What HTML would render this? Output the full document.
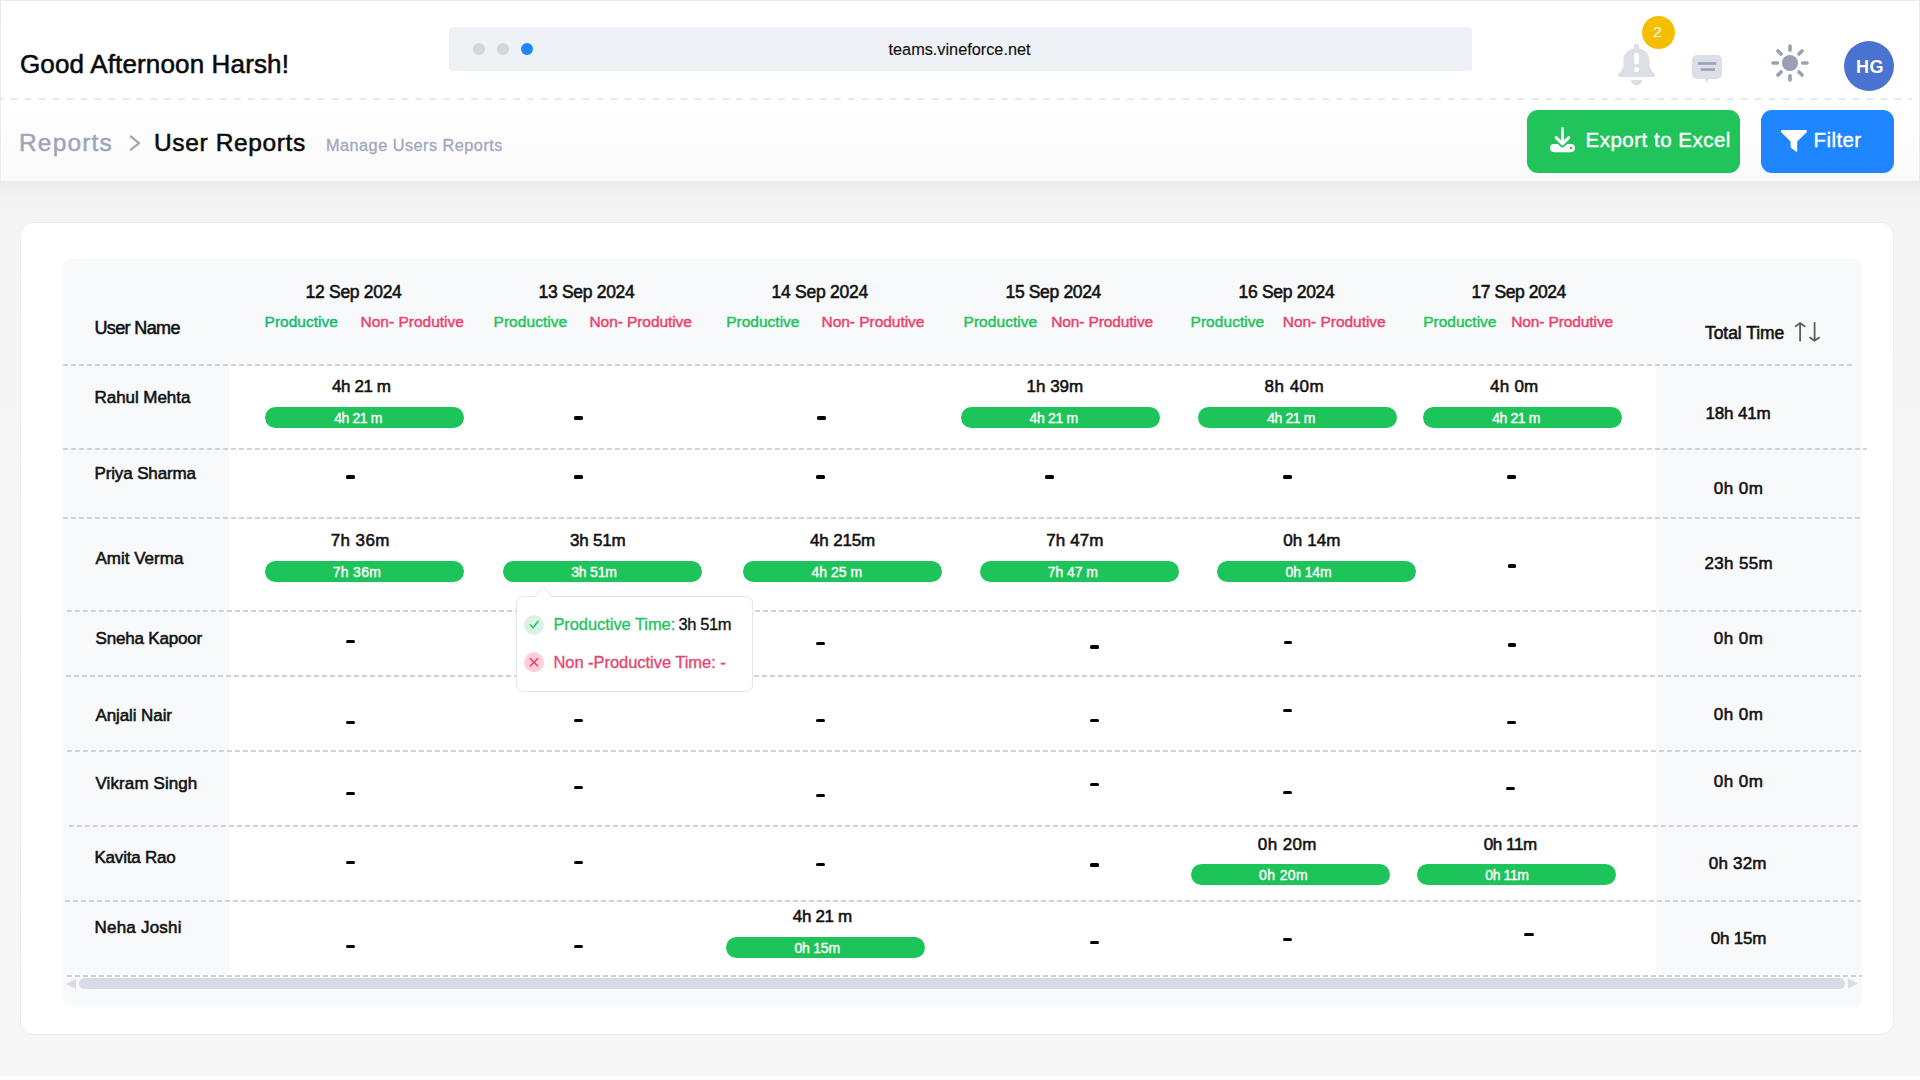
<!DOCTYPE html>
<html><head><meta charset="utf-8"><title>User Reports</title>
<style>
html,body{margin:0;padding:0;width:1920px;height:1080px;overflow:hidden;background:#f7f7f7}
body{position:relative;font-family:"Liberation Sans", sans-serif}
.t{position:absolute;white-space:nowrap;font-family:"Liberation Sans", sans-serif}
</style></head><body>
<div style="position:absolute;left:0;top:0;width:1920px;height:1080px;background:linear-gradient(#e9ebe9 0px,#ebebeb 182px,#f0f0f0 188px,#f3f3f3 200px,#f5f5f5 222px,#f6f6f6 600px,#f7f7f7 1076px,#fcfcfc 1077px,#fcfcfc 1080px)"></div><div style="position:absolute;left:1px;top:1px;width:1918px;height:180px;background:linear-gradient(#ffffff 0px,#ffffff 100px,#fafafa 180px);border-bottom:1px solid #ebebeb"></div><div style="position:absolute;left:0;top:98px;width:1912px;height:2px;background-image:linear-gradient(90deg,#e6e9f0 0 50%,transparent 50% 100%);background-size:13.955px 2px;background-position:10.63px 0"></div><div style="position:absolute;left:449px;top:27px;width:1023px;height:44px;border-radius:4px;background:#eef1f6"></div><div style="position:absolute;left:473px;top:43px;width:12px;height:12px;border-radius:50%;background:#d6d6d6"></div><div style="position:absolute;left:497px;top:43px;width:12px;height:12px;border-radius:50%;background:#d6d6d6"></div><div style="position:absolute;left:521px;top:43px;width:12px;height:12px;border-radius:50%;background:#1e85ff"></div><svg style="position:absolute;left:1610px;top:40px" width="52" height="50" viewBox="1610 40 52 50">
<circle cx="1636.5" cy="46.4" r="2.6" fill="#dcdfe5"/>
<path d="M1636.5 48 C1628.8 48 1623.4 53.5 1623.4 61.5 V65.5 C1623.4 69 1619.5 72.5 1618.3 74.3 Q1617 77 1620.2 77 H1652.8 Q1656 77 1654.7 74.3 C1653.5 72.5 1649.6 69 1649.6 65.5 V61.5 C1649.6 53.5 1644.2 48 1636.5 48 Z" fill="#dcdfe5"/>
<path d="M1631 80 H1642 A5.5 5.2 0 0 1 1631 80 Z" fill="#dcdfe5"/>
<rect x="1634.1" y="52.8" width="4.8" height="11.8" rx="2.4" fill="#ffffff"/>
<circle cx="1636.5" cy="69.6" r="2.5" fill="#ffffff"/>
</svg><div style="position:absolute;left:1641.5px;top:15.5px;width:33px;height:33px;border-radius:50%;background:#f5be00"></div><svg style="position:absolute;left:1690px;top:53px" width="36" height="32" viewBox="1690 53 36 32">
<path d="M1697 55 h20 a5 5 0 0 1 5 5 v14 a5 5 0 0 1 -5 5 h-8.5 l-2 3.5 l-2 -3.5 h-7.5 a5 5 0 0 1 -5 -5 v-14 a5 5 0 0 1 5 -5 z" fill="#dcdfe6"/>
<rect x="1698" y="62.2" width="18.2" height="2.6" fill="#9aa1b5"/>
<rect x="1700.6" y="68.2" width="14.4" height="2.6" fill="#9aa1b5"/>
</svg><svg style="position:absolute;left:1766px;top:39px" width="48" height="48" viewBox="1766 39 48 48">
<circle cx="1790" cy="63" r="8.1" fill="#98a0b3"/>
<g stroke="#98a0b3" stroke-width="3.6" stroke-linecap="round"><line x1="1790.00" y1="50.30" x2="1790.00" y2="46.00"/><line x1="1798.98" y1="54.02" x2="1802.02" y2="50.98"/><line x1="1802.70" y1="63.00" x2="1807.00" y2="63.00"/><line x1="1798.98" y1="71.98" x2="1802.02" y2="75.02"/><line x1="1790.00" y1="75.70" x2="1790.00" y2="80.00"/><line x1="1781.02" y1="71.98" x2="1777.98" y2="75.02"/><line x1="1777.30" y1="63.00" x2="1773.00" y2="63.00"/><line x1="1781.02" y1="54.02" x2="1777.98" y2="50.98"/></g></svg><div style="position:absolute;left:1844px;top:41px;width:50px;height:50px;border-radius:50%;background:#4a72d0"></div><svg style="position:absolute;left:125px;top:133px" width="20" height="22" viewBox="125 133 20 22"><path d="M131 136.6 L139 143.1 L131 149.6" fill="none" stroke="#a3aabf" stroke-width="2.5" stroke-linecap="round" stroke-linejoin="round"/></svg><div style="position:absolute;left:1527px;top:110px;width:213px;height:63px;border-radius:11px;background:#21c45b"></div><div style="position:absolute;left:1761px;top:110px;width:133px;height:63px;border-radius:11px;background:#1f86ff"></div><svg style="position:absolute;left:1546px;top:124px" width="34" height="32" viewBox="1546 124 34 32">
<rect x="1550" y="144" width="25" height="8.2" rx="4.1" fill="#fff"/>
<path d="M1556.2 137.6 L1562.5 143.9 L1568.8 137.6" stroke="#21c45b" stroke-width="6.6" fill="none" stroke-linecap="round" stroke-linejoin="round"/>
<path d="M1562.5 128.5 V142" stroke="#fff" stroke-width="2.9" stroke-linecap="round"/>
<path d="M1556.2 137.6 L1562.5 143.9 L1568.8 137.6" stroke="#fff" stroke-width="3" fill="none" stroke-linecap="round" stroke-linejoin="round"/>
<circle cx="1571" cy="148" r="1.25" fill="#21c45b"/>
</svg><svg style="position:absolute;left:1778px;top:127px" width="32" height="28" viewBox="1778 127 32 28">
<path d="M1782.4 130 H1805.6 Q1807.8 130 1806.6 132.2 L1797.2 141.6 V150.8 Q1797.2 152.6 1795.8 151.6 L1791.3 147.9 Q1790.6 147.3 1790.6 146.5 V141.6 L1781.3 132.2 Q1780.1 130 1782.4 130 Z" fill="#fff"/>
</svg><div style="position:absolute;left:20px;top:222px;width:1872px;height:811px;border-radius:13px;background:#ffffff;border:1px solid #ededed"></div><div style="position:absolute;left:63px;top:259px;width:1799px;height:748px;border-radius:8px;background:#f8f9fb"></div><div style="position:absolute;left:229px;top:365px;width:1427px;height:611px;background:#ffffff"></div><div style="position:absolute;left:63px;top:364.2px;width:1792px;height:1.6px;background:repeating-linear-gradient(90deg,#cfd2de 0 5px,transparent 5px 8px)"></div><div style="position:absolute;left:63px;top:448.2px;width:1804px;height:1.6px;background:repeating-linear-gradient(90deg,#cfd2de 0 5px,transparent 5px 8px)"></div><div style="position:absolute;left:63px;top:517.2px;width:1797px;height:1.6px;background:repeating-linear-gradient(90deg,#cfd2de 0 5px,transparent 5px 8px)"></div><div style="position:absolute;left:67px;top:610.2px;width:1794px;height:1.6px;background:repeating-linear-gradient(90deg,#cfd2de 0 5px,transparent 5px 8px)"></div><div style="position:absolute;left:66px;top:675.2px;width:1795px;height:1.6px;background:repeating-linear-gradient(90deg,#cfd2de 0 5px,transparent 5px 8px)"></div><div style="position:absolute;left:67px;top:750.2px;width:1794px;height:1.6px;background:repeating-linear-gradient(90deg,#cfd2de 0 5px,transparent 5px 8px)"></div><div style="position:absolute;left:69px;top:825.2px;width:1792px;height:1.6px;background:repeating-linear-gradient(90deg,#cfd2de 0 5px,transparent 5px 8px)"></div><div style="position:absolute;left:65px;top:900.2px;width:1796px;height:1.6px;background:repeating-linear-gradient(90deg,#cfd2de 0 5px,transparent 5px 8px)"></div><div style="position:absolute;left:67px;top:975.2px;width:1795px;height:1.6px;background:repeating-linear-gradient(90deg,#cfd2de 0 5px,transparent 5px 8px)"></div><div style="position:absolute;left:265px;top:407.0px;width:199px;height:21px;border-radius:11px;background:#1dc459"></div><div style="position:absolute;left:961px;top:407.0px;width:199px;height:21px;border-radius:11px;background:#1dc459"></div><div style="position:absolute;left:1198px;top:407.0px;width:199px;height:21px;border-radius:11px;background:#1dc459"></div><div style="position:absolute;left:1423px;top:407.0px;width:199px;height:21px;border-radius:11px;background:#1dc459"></div><div style="position:absolute;left:265px;top:561.0px;width:199px;height:21px;border-radius:11px;background:#1dc459"></div><div style="position:absolute;left:503px;top:561.0px;width:199px;height:21px;border-radius:11px;background:#1dc459"></div><div style="position:absolute;left:743px;top:561.0px;width:199px;height:21px;border-radius:11px;background:#1dc459"></div><div style="position:absolute;left:980px;top:561.0px;width:199px;height:21px;border-radius:11px;background:#1dc459"></div><div style="position:absolute;left:1217px;top:561.0px;width:199px;height:21px;border-radius:11px;background:#1dc459"></div><div style="position:absolute;left:1191px;top:864.0px;width:199px;height:21px;border-radius:11px;background:#1dc459"></div><div style="position:absolute;left:1417px;top:864.0px;width:199px;height:21px;border-radius:11px;background:#1dc459"></div><div style="position:absolute;left:726px;top:937.0px;width:199px;height:21px;border-radius:11px;background:#1dc459"></div><div style="position:absolute;left:574.0px;top:416.0px;width:9.0px;height:3.5px;border-radius:1.5px;background:#000"></div><div style="position:absolute;left:817.0px;top:416.0px;width:9.0px;height:3.5px;border-radius:1.5px;background:#000"></div><div style="position:absolute;left:346.0px;top:475.3px;width:9.0px;height:3.7px;border-radius:1.5px;background:#000"></div><div style="position:absolute;left:574.0px;top:475.3px;width:9.0px;height:3.7px;border-radius:1.5px;background:#000"></div><div style="position:absolute;left:816.0px;top:475.3px;width:9.0px;height:3.7px;border-radius:1.5px;background:#000"></div><div style="position:absolute;left:1045.0px;top:475.3px;width:9.0px;height:3.7px;border-radius:1.5px;background:#000"></div><div style="position:absolute;left:1283.0px;top:475.3px;width:9.0px;height:3.7px;border-radius:1.5px;background:#000"></div><div style="position:absolute;left:1507.0px;top:475.3px;width:9.0px;height:3.7px;border-radius:1.5px;background:#000"></div><div style="position:absolute;left:1507.5px;top:564.0px;width:8.8px;height:3.5px;border-radius:1.5px;background:#000"></div><div style="position:absolute;left:346.0px;top:640.0px;width:9.0px;height:3.3px;border-radius:1.5px;background:#000"></div><div style="position:absolute;left:816.0px;top:642.0px;width:9.0px;height:3.4px;border-radius:1.5px;background:#000"></div><div style="position:absolute;left:1090.0px;top:645.0px;width:9.0px;height:3.5px;border-radius:1.5px;background:#000"></div><div style="position:absolute;left:1284.0px;top:640.5px;width:8.0px;height:3.5px;border-radius:1.5px;background:#000"></div><div style="position:absolute;left:1508.0px;top:643.0px;width:8.0px;height:3.5px;border-radius:1.5px;background:#000"></div><div style="position:absolute;left:346.0px;top:720.6px;width:9.0px;height:3.4px;border-radius:1.5px;background:#000"></div><div style="position:absolute;left:574.0px;top:719.0px;width:9.0px;height:3.4px;border-radius:1.5px;background:#000"></div><div style="position:absolute;left:816.0px;top:719.0px;width:9.0px;height:3.4px;border-radius:1.5px;background:#000"></div><div style="position:absolute;left:1090.0px;top:719.0px;width:9.0px;height:3.4px;border-radius:1.5px;background:#000"></div><div style="position:absolute;left:1283.0px;top:709.0px;width:9.0px;height:3.4px;border-radius:1.5px;background:#000"></div><div style="position:absolute;left:1507.0px;top:720.6px;width:9.0px;height:3.4px;border-radius:1.5px;background:#000"></div><div style="position:absolute;left:346.0px;top:792.0px;width:9.0px;height:3.4px;border-radius:1.5px;background:#000"></div><div style="position:absolute;left:574.0px;top:786.0px;width:9.0px;height:3.4px;border-radius:1.5px;background:#000"></div><div style="position:absolute;left:816.0px;top:794.0px;width:9.0px;height:3.4px;border-radius:1.5px;background:#000"></div><div style="position:absolute;left:1090.0px;top:782.5px;width:9.0px;height:3.5px;border-radius:1.5px;background:#000"></div><div style="position:absolute;left:1283.0px;top:790.6px;width:9.0px;height:3.4px;border-radius:1.5px;background:#000"></div><div style="position:absolute;left:1506.0px;top:787.0px;width:9.0px;height:3.4px;border-radius:1.5px;background:#000"></div><div style="position:absolute;left:346.0px;top:860.6px;width:9.0px;height:3.4px;border-radius:1.5px;background:#000"></div><div style="position:absolute;left:574.0px;top:860.6px;width:9.0px;height:3.4px;border-radius:1.5px;background:#000"></div><div style="position:absolute;left:816.0px;top:863.0px;width:9.0px;height:3.4px;border-radius:1.5px;background:#000"></div><div style="position:absolute;left:1090.0px;top:863.3px;width:9.0px;height:3.4px;border-radius:1.5px;background:#000"></div><div style="position:absolute;left:346.0px;top:945.0px;width:9.0px;height:3.4px;border-radius:1.5px;background:#000"></div><div style="position:absolute;left:574.0px;top:945.0px;width:9.0px;height:3.4px;border-radius:1.5px;background:#000"></div><div style="position:absolute;left:1090.0px;top:940.5px;width:9.0px;height:3.5px;border-radius:1.5px;background:#000"></div><div style="position:absolute;left:1283.0px;top:938.0px;width:9.0px;height:3.4px;border-radius:1.5px;background:#000"></div><div style="position:absolute;left:1524.0px;top:933.0px;width:10.0px;height:3.4px;border-radius:1.5px;background:#000"></div><svg style="position:absolute;left:1790px;top:318px" width="36" height="28" viewBox="1790 318 36 28">
<g fill="none" stroke="#5e5e5e" stroke-width="1.8" stroke-linecap="round" stroke-linejoin="round">
<path d="M1800.1 340.8 V323.2 M1795.7 326.2 L1800.1 322.9 L1804.6 326.2"/>
<path d="M1814.6 323 V340.6 M1810 337.6 L1814.6 340.8 L1819.2 337.6"/>
</g></svg><div style="position:absolute;left:79px;top:978px;width:1766px;height:11px;border-radius:6px;background:#d9dce6"></div><svg style="position:absolute;left:60px;top:975px" width="20" height="18" viewBox="60 975 20 18"><path d="M66 984 L76 979 V989 Z" fill="#d7dbe4"/></svg><svg style="position:absolute;left:1845px;top:975px" width="20" height="18" viewBox="1845 975 20 18"><path d="M1858 983.5 L1848 978.5 V988.5 Z" fill="#d7dbe4"/></svg><div style="position:absolute;left:516px;top:596px;width:235px;height:94px;border-radius:7px;background:#fff;border:1px solid #e2e4ea"></div><svg style="position:absolute;left:530px;top:584px" width="28" height="16" viewBox="530 584 28 16"><path d="M534.5 597.5 L543.5 586.5 L552.5 597.5" fill="#fff" stroke="#e2e4ea" stroke-width="1"/><rect x="534" y="597" width="20" height="2" fill="#fff"/></svg><svg style="position:absolute;left:520px;top:610px" width="30" height="66" viewBox="520 610 30 66">
<circle cx="534" cy="625" r="10" fill="#d8f3e5"/>
<path d="M530.2 624.7 l2.9 3 l5 -6.4" fill="none" stroke="#22c35a" stroke-width="1.4" stroke-linecap="round" stroke-linejoin="round"/>
<circle cx="534" cy="662.3" r="10" fill="#fccfda"/>
<path d="M530.3 658.6 l7.4 7.4 M537.7 658.6 l-7.4 7.4" fill="none" stroke="#e9436b" stroke-width="1.6" stroke-linecap="round"/>
</svg><div id="t_title" class="t" style="left:20.00px;top:51.39px;font-size:26.00px;line-height:26.00px;font-weight:400;color:#0a0a0a;letter-spacing:0.150px;-webkit-text-stroke:0.55px #0a0a0a">Good Afternoon Harsh!</div><div id="t_url" class="t" style="left:888.50px;top:41.00px;font-size:16.30px;line-height:16.30px;font-weight:400;color:#111111;letter-spacing:0.000px;-webkit-text-stroke:0.15px #111111">teams.vineforce.net</div><div id="t_reports" class="t" style="left:19.00px;top:131.26px;font-size:24.50px;line-height:24.50px;font-weight:400;color:#9ea5ba;letter-spacing:1.167px;-webkit-text-stroke:0.50px #9ea5ba">Reports</div><div id="t_userreports" class="t" style="left:154.00px;top:131.26px;font-size:24.50px;line-height:24.50px;font-weight:400;color:#0b0b0b;letter-spacing:0.636px;-webkit-text-stroke:0.55px #0b0b0b">User Reports</div><div id="t_manage" class="t" style="left:326.00px;top:137.20px;font-size:16.30px;line-height:16.30px;font-weight:400;color:#a0a7bc;letter-spacing:0.474px;-webkit-text-stroke:0.30px #a0a7bc">Manage Users Reports</div><div id="t_export" class="t" style="left:1585.50px;top:130.05px;font-size:20.50px;line-height:20.50px;font-weight:400;color:#ffffff;letter-spacing:0.500px;-webkit-text-stroke:0.40px #ffffff">Export to Excel</div><div id="t_filter" class="t" style="left:1813.60px;top:130.05px;font-size:20.50px;line-height:20.50px;font-weight:400;color:#ffffff;letter-spacing:0.400px;-webkit-text-stroke:0.40px #ffffff">Filter</div><div id="t_hg" class="t" style="left:1856.00px;top:58.46px;font-size:18.00px;line-height:18.00px;font-weight:700;color:#ffffff;letter-spacing:0.500px">HG</div><div id="t_badge" class="t" style="left:1653.30px;top:24.18px;font-size:15.50px;line-height:15.50px;font-weight:400;color:#ffffff;letter-spacing:0.000px">2</div><div id="h_user" class="t" style="left:94.40px;top:318.56px;font-size:18.00px;line-height:18.00px;font-weight:400;color:#111111;letter-spacing:-0.625px;-webkit-text-stroke:0.55px #111111">User Name</div><div id="h_date0" class="t" style="left:305.60px;top:283.79px;font-size:17.50px;line-height:17.50px;font-weight:400;color:#111111;letter-spacing:-0.300px;-webkit-text-stroke:0.55px #111111">12 Sep 2024</div><div id="h_date1" class="t" style="left:538.50px;top:283.79px;font-size:17.50px;line-height:17.50px;font-weight:400;color:#111111;letter-spacing:-0.300px;-webkit-text-stroke:0.55px #111111">13 Sep 2024</div><div id="h_date2" class="t" style="left:771.50px;top:283.79px;font-size:17.50px;line-height:17.50px;font-weight:400;color:#111111;letter-spacing:-0.250px;-webkit-text-stroke:0.55px #111111">14 Sep 2024</div><div id="h_date3" class="t" style="left:1005.50px;top:283.79px;font-size:17.50px;line-height:17.50px;font-weight:400;color:#111111;letter-spacing:-0.350px;-webkit-text-stroke:0.55px #111111">15 Sep 2024</div><div id="h_date4" class="t" style="left:1238.50px;top:283.79px;font-size:17.50px;line-height:17.50px;font-weight:400;color:#111111;letter-spacing:-0.300px;-webkit-text-stroke:0.55px #111111">16 Sep 2024</div><div id="h_date5" class="t" style="left:1471.50px;top:283.79px;font-size:17.50px;line-height:17.50px;font-weight:400;color:#111111;letter-spacing:-0.450px;-webkit-text-stroke:0.55px #111111">17 Sep 2024</div><div id="h_prod0" class="t" style="left:264.60px;top:314.48px;font-size:15.50px;line-height:15.50px;font-weight:400;color:#12bb6e;letter-spacing:-0.000px;-webkit-text-stroke:0.45px #12bb6e">Productive</div><div id="h_prod1" class="t" style="left:493.50px;top:314.48px;font-size:15.50px;line-height:15.50px;font-weight:400;color:#22c35a;letter-spacing:0.056px;-webkit-text-stroke:0.45px #22c35a">Productive</div><div id="h_prod2" class="t" style="left:726.25px;top:314.48px;font-size:15.50px;line-height:15.50px;font-weight:400;color:#22c35a;letter-spacing:0.000px;-webkit-text-stroke:0.45px #22c35a">Productive</div><div id="h_prod3" class="t" style="left:963.50px;top:314.48px;font-size:15.50px;line-height:15.50px;font-weight:400;color:#22c35a;letter-spacing:0.056px;-webkit-text-stroke:0.45px #22c35a">Productive</div><div id="h_prod4" class="t" style="left:1190.50px;top:314.48px;font-size:15.50px;line-height:15.50px;font-weight:400;color:#22c35a;letter-spacing:0.056px;-webkit-text-stroke:0.45px #22c35a">Productive</div><div id="h_prod5" class="t" style="left:1423.25px;top:314.48px;font-size:15.50px;line-height:15.50px;font-weight:400;color:#22c35a;letter-spacing:0.000px;-webkit-text-stroke:0.45px #22c35a">Productive</div><div id="h_non0" class="t" style="left:360.50px;top:314.48px;font-size:15.50px;line-height:15.50px;font-weight:400;color:#e9436b;letter-spacing:-0.000px;-webkit-text-stroke:0.45px #e9436b">Non- Produtive</div><div id="h_non1" class="t" style="left:589.50px;top:314.48px;font-size:15.50px;line-height:15.50px;font-weight:400;color:#e9436b;letter-spacing:-0.077px;-webkit-text-stroke:0.45px #e9436b">Non- Produtive</div><div id="h_non2" class="t" style="left:821.50px;top:314.48px;font-size:15.50px;line-height:15.50px;font-weight:400;color:#e9436b;letter-spacing:-0.038px;-webkit-text-stroke:0.45px #e9436b">Non- Produtive</div><div id="h_non3" class="t" style="left:1051.25px;top:314.48px;font-size:15.50px;line-height:15.50px;font-weight:400;color:#e9436b;letter-spacing:-0.115px;-webkit-text-stroke:0.45px #e9436b">Non- Produtive</div><div id="h_non4" class="t" style="left:1282.75px;top:314.48px;font-size:15.50px;line-height:15.50px;font-weight:400;color:#e9436b;letter-spacing:-0.038px;-webkit-text-stroke:0.45px #e9436b">Non- Produtive</div><div id="h_non5" class="t" style="left:1511.25px;top:314.48px;font-size:15.50px;line-height:15.50px;font-weight:400;color:#e9436b;letter-spacing:-0.115px;-webkit-text-stroke:0.45px #e9436b">Non- Produtive</div><div id="h_total" class="t" style="left:1705.00px;top:324.69px;font-size:17.50px;line-height:17.50px;font-weight:400;color:#111111;letter-spacing:-0.056px;-webkit-text-stroke:0.55px #111111">Total Time</div><div id="n0" class="t" style="left:94.50px;top:388.61px;font-size:17.00px;line-height:17.00px;font-weight:400;color:#111111;letter-spacing:-0.050px;-webkit-text-stroke:0.55px #111111">Rahul Mehta</div><div id="n1" class="t" style="left:94.50px;top:465.11px;font-size:17.00px;line-height:17.00px;font-weight:400;color:#111111;letter-spacing:-0.136px;-webkit-text-stroke:0.55px #111111">Priya Sharma</div><div id="n2" class="t" style="left:95.50px;top:550.11px;font-size:17.00px;line-height:17.00px;font-weight:400;color:#111111;letter-spacing:0.000px;-webkit-text-stroke:0.55px #111111">Amit Verma</div><div id="n3" class="t" style="left:95.50px;top:630.11px;font-size:17.00px;line-height:17.00px;font-weight:400;color:#111111;letter-spacing:-0.182px;-webkit-text-stroke:0.55px #111111">Sneha Kapoor</div><div id="n4" class="t" style="left:95.50px;top:707.11px;font-size:17.00px;line-height:17.00px;font-weight:400;color:#111111;letter-spacing:-0.100px;-webkit-text-stroke:0.55px #111111">Anjali Nair</div><div id="n5" class="t" style="left:95.50px;top:774.61px;font-size:17.00px;line-height:17.00px;font-weight:400;color:#111111;letter-spacing:0.091px;-webkit-text-stroke:0.55px #111111">Vikram Singh</div><div id="n6" class="t" style="left:94.50px;top:848.61px;font-size:17.00px;line-height:17.00px;font-weight:400;color:#111111;letter-spacing:-0.222px;-webkit-text-stroke:0.55px #111111">Kavita Rao</div><div id="n7" class="t" style="left:94.50px;top:919.41px;font-size:17.00px;line-height:17.00px;font-weight:400;color:#111111;letter-spacing:0.222px;-webkit-text-stroke:0.55px #111111">Neha Joshi</div><div id="c0" class="t" style="left:332.00px;top:377.61px;font-size:17.00px;line-height:17.00px;font-weight:400;color:#111111;letter-spacing:-0.417px;-webkit-text-stroke:0.55px #111111">4h 21 m</div><div id="c1" class="t" style="left:1026.50px;top:377.61px;font-size:17.00px;line-height:17.00px;font-weight:400;color:#111111;letter-spacing:0.000px;-webkit-text-stroke:0.55px #111111">1h 39m</div><div id="c2" class="t" style="left:1264.50px;top:377.61px;font-size:17.00px;line-height:17.00px;font-weight:400;color:#111111;letter-spacing:0.500px;-webkit-text-stroke:0.55px #111111">8h 40m</div><div id="c3" class="t" style="left:1490.00px;top:377.61px;font-size:17.00px;line-height:17.00px;font-weight:400;color:#111111;letter-spacing:0.250px;-webkit-text-stroke:0.55px #111111">4h 0m</div><div id="c4" class="t" style="left:330.75px;top:531.61px;font-size:17.00px;line-height:17.00px;font-weight:400;color:#111111;letter-spacing:0.400px;-webkit-text-stroke:0.55px #111111">7h 36m</div><div id="c5" class="t" style="left:570.00px;top:531.61px;font-size:17.00px;line-height:17.00px;font-weight:400;color:#111111;letter-spacing:-0.200px;-webkit-text-stroke:0.55px #111111">3h 51m</div><div id="c6" class="t" style="left:810.00px;top:531.61px;font-size:17.00px;line-height:17.00px;font-weight:400;color:#111111;letter-spacing:-0.167px;-webkit-text-stroke:0.55px #111111">4h 215m</div><div id="c7" class="t" style="left:1046.25px;top:531.61px;font-size:17.00px;line-height:17.00px;font-weight:400;color:#111111;letter-spacing:0.100px;-webkit-text-stroke:0.55px #111111">7h 47m</div><div id="c8" class="t" style="left:1283.25px;top:531.61px;font-size:17.00px;line-height:17.00px;font-weight:400;color:#111111;letter-spacing:0.100px;-webkit-text-stroke:0.55px #111111">0h 14m</div><div id="c9" class="t" style="left:1257.80px;top:835.61px;font-size:17.00px;line-height:17.00px;font-weight:400;color:#111111;letter-spacing:0.400px;-webkit-text-stroke:0.55px #111111">0h 20m</div><div id="c10" class="t" style="left:1483.70px;top:835.61px;font-size:17.00px;line-height:17.00px;font-weight:400;color:#111111;letter-spacing:-0.400px;-webkit-text-stroke:0.55px #111111">0h 11m</div><div id="c11" class="t" style="left:792.80px;top:908.01px;font-size:17.00px;line-height:17.00px;font-weight:400;color:#111111;letter-spacing:-0.333px;-webkit-text-stroke:0.55px #111111">4h 21 m</div><div id="b0" class="t" style="left:334.25px;top:411.15px;font-size:14.00px;line-height:14.00px;font-weight:400;color:#ffffff;letter-spacing:-0.417px;-webkit-text-stroke:0.40px #ffffff">4h 21 m</div><div id="b1" class="t" style="left:1029.50px;top:411.15px;font-size:14.00px;line-height:14.00px;font-weight:400;color:#ffffff;letter-spacing:-0.333px;-webkit-text-stroke:0.40px #ffffff">4h 21 m</div><div id="b2" class="t" style="left:1267.25px;top:411.15px;font-size:14.00px;line-height:14.00px;font-weight:400;color:#ffffff;letter-spacing:-0.417px;-webkit-text-stroke:0.40px #ffffff">4h 21 m</div><div id="b3" class="t" style="left:1492.25px;top:411.15px;font-size:14.00px;line-height:14.00px;font-weight:400;color:#ffffff;letter-spacing:-0.417px;-webkit-text-stroke:0.40px #ffffff">4h 21 m</div><div id="b4" class="t" style="left:332.75px;top:565.15px;font-size:14.00px;line-height:14.00px;font-weight:400;color:#ffffff;letter-spacing:0.300px;-webkit-text-stroke:0.40px #ffffff">7h 36m</div><div id="b5" class="t" style="left:571.25px;top:565.15px;font-size:14.00px;line-height:14.00px;font-weight:400;color:#ffffff;letter-spacing:-0.200px;-webkit-text-stroke:0.40px #ffffff">3h 51m</div><div id="b6" class="t" style="left:811.50px;top:565.15px;font-size:14.00px;line-height:14.00px;font-weight:400;color:#ffffff;letter-spacing:0.000px;-webkit-text-stroke:0.40px #ffffff">4h 25 m</div><div id="b7" class="t" style="left:1047.75px;top:565.15px;font-size:14.00px;line-height:14.00px;font-weight:400;color:#ffffff;letter-spacing:-0.083px;-webkit-text-stroke:0.40px #ffffff">7h 47 m</div><div id="b8" class="t" style="left:1285.50px;top:565.15px;font-size:14.00px;line-height:14.00px;font-weight:400;color:#ffffff;letter-spacing:-0.100px;-webkit-text-stroke:0.40px #ffffff">0h 14m</div><div id="b9" class="t" style="left:1259.00px;top:867.65px;font-size:14.00px;line-height:14.00px;font-weight:400;color:#ffffff;letter-spacing:0.400px;-webkit-text-stroke:0.40px #ffffff">0h 20m</div><div id="b10" class="t" style="left:1485.30px;top:867.65px;font-size:14.00px;line-height:14.00px;font-weight:400;color:#ffffff;letter-spacing:-0.400px;-webkit-text-stroke:0.40px #ffffff">0h 11m</div><div id="b11" class="t" style="left:794.40px;top:941.15px;font-size:14.00px;line-height:14.00px;font-weight:400;color:#ffffff;letter-spacing:-0.200px;-webkit-text-stroke:0.40px #ffffff">0h 15m</div><div id="tot0" class="t" style="left:1705.50px;top:405.41px;font-size:17.00px;line-height:17.00px;font-weight:400;color:#111111;letter-spacing:-0.167px;-webkit-text-stroke:0.55px #111111">18h 41m</div><div id="tot1" class="t" style="left:1713.70px;top:480.01px;font-size:17.00px;line-height:17.00px;font-weight:400;color:#111111;letter-spacing:0.500px;-webkit-text-stroke:0.55px #111111">0h 0m</div><div id="tot2" class="t" style="left:1704.50px;top:555.41px;font-size:17.00px;line-height:17.00px;font-weight:400;color:#111111;letter-spacing:0.333px;-webkit-text-stroke:0.55px #111111">23h 55m</div><div id="tot3" class="t" style="left:1713.70px;top:629.61px;font-size:17.00px;line-height:17.00px;font-weight:400;color:#111111;letter-spacing:0.500px;-webkit-text-stroke:0.55px #111111">0h 0m</div><div id="tot4" class="t" style="left:1713.70px;top:706.01px;font-size:17.00px;line-height:17.00px;font-weight:400;color:#111111;letter-spacing:0.500px;-webkit-text-stroke:0.55px #111111">0h 0m</div><div id="tot5" class="t" style="left:1713.70px;top:772.61px;font-size:17.00px;line-height:17.00px;font-weight:400;color:#111111;letter-spacing:0.500px;-webkit-text-stroke:0.55px #111111">0h 0m</div><div id="tot6" class="t" style="left:1708.80px;top:855.41px;font-size:17.00px;line-height:17.00px;font-weight:400;color:#111111;letter-spacing:0.200px;-webkit-text-stroke:0.55px #111111">0h 32m</div><div id="tot7" class="t" style="left:1710.80px;top:929.61px;font-size:17.00px;line-height:17.00px;font-weight:400;color:#111111;letter-spacing:-0.200px;-webkit-text-stroke:0.55px #111111">0h 15m</div><div id="tt1" class="t" style="left:553.40px;top:616.43px;font-size:16.50px;line-height:16.50px;font-weight:400;color:#22c35a;letter-spacing:-0.067px;-webkit-text-stroke:0.30px #22c35a">Productive Time:</div><div id="tt2" class="t" style="left:678.50px;top:616.43px;font-size:16.50px;line-height:16.50px;font-weight:400;color:#111111;letter-spacing:-0.400px;-webkit-text-stroke:0.30px #111111">3h 51m</div><div id="tt3" class="t" style="left:553.40px;top:654.43px;font-size:16.50px;line-height:16.50px;font-weight:400;color:#e9436b;letter-spacing:-0.045px;-webkit-text-stroke:0.30px #e9436b">Non -Productive Time: -</div>
</body></html>
